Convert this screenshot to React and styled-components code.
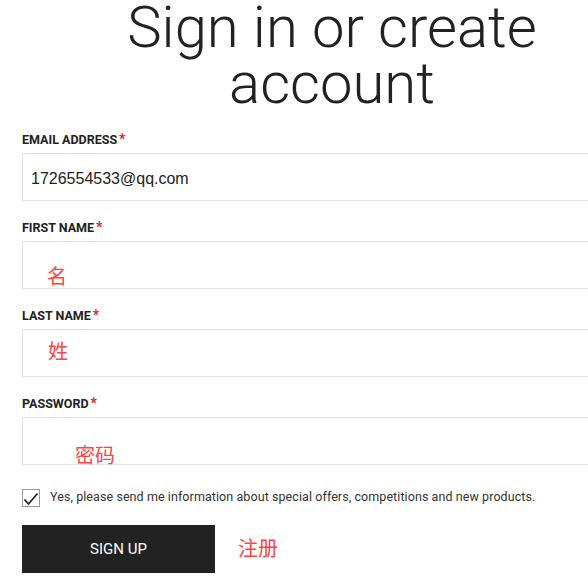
import React from "react";
import styled, { createGlobalStyle } from "styled-components";

const GlobalStyle = createGlobalStyle`
  html, body {
    margin: 0;
    padding: 0;
    background: #fff;
    overflow: hidden;
  }
  body {
    font-family: Roboto, "Liberation Sans", sans-serif;
    color: #222;
  }
`;

const fields = [
  { label: "Email address", value: "1726554533@qq.com" },
  { label: "First name", note: "名", noteLeft: 24, noteTop: 24 },
  { label: "Last name", note: "姓", noteLeft: 25, noteTop: 11 },
  { label: "Password", note: "密码", noteLeft: 52, noteTop: 27 }
];

class App extends React.Component {
  renderFields = () => {
    return fields.map((field, index) => (
      <Field key={index}>
        <Label>
          {field.label}
          <Star>*</Star>
        </Label>
        <InputBox>
          {field.value && <Value>{field.value}</Value>}
          {field.note && (
            <Note style={{ left: field.noteLeft, top: field.noteTop }}>
              {field.note}
            </Note>
          )}
        </InputBox>
      </Field>
    ));
  };

  render() {
    return (
      <>
        <GlobalStyle />
        <Page>
          <Title>
            Sign in or create
            <br />
            account
          </Title>
          <Form>
            {this.renderFields()}
            <CheckRow>
              <CheckBox>
                <svg width="16" height="14" viewBox="0 0 16 14">
                  <path
                    d="M1.5 7.5 L5.5 12 L14.5 1.5"
                    fill="none"
                    stroke="#222"
                    strokeWidth="1.8"
                  />
                </svg>
              </CheckBox>
              <CheckText>
                Yes, please send me information about special offers,
                competitions and new products.
              </CheckText>
            </CheckRow>
            <ButtonRow>
              <SignUp>SIGN UP</SignUp>
              <Annotation>注册</Annotation>
            </ButtonRow>
          </Form>
        </Page>
      </>
    );
  }
}

const Page = styled.div`
  width: 620px;
  margin-left: 22px;
`;

const Title = styled.h1`
  margin: -1px 0 0;
  font-family: Roboto, sans-serif;
  font-weight: 300;
  font-size: 58px;
  line-height: 56px;
  text-align: center;
  color: #222;
`;

const Form = styled.div`
  display: flex;
  flex-direction: column;
  margin-top: 21px;
`;

const Field = styled.div`
  display: flex;
  flex-direction: column;
  margin-bottom: 19px;
`;

const Label = styled.div`
  height: 15px;
  font-family: Roboto, sans-serif;
  font-weight: 700;
  font-size: 12.5px;
  line-height: 15px;
  text-transform: uppercase;
  color: #222;
  margin-bottom: 6px;
`;

const Star = styled.span`
  color: #e31e1e;
  margin-left: 2px;
  font-size: 14px;
  line-height: 0;
`;

const InputBox = styled.div`
  position: relative;
  height: 46px;
  border: 1px solid #e3e3e3;
  display: flex;
  align-items: center;
  padding-left: 8px;
`;

const Value = styled.span`
  font-family: "Liberation Sans", Arial, sans-serif;
  font-size: 16px;
  color: #222;
  margin-top: 3px;
`;

const Note = styled.span`
  position: absolute;
  font-family: "Noto Sans CJK SC", sans-serif;
  font-size: 20px;
  line-height: 20px;
  color: #f44;
`;

const CheckRow = styled.div`
  display: flex;
  align-items: center;
  gap: 10px;
  margin-top: 5px;
`;

const CheckBox = styled.div`
  width: 16px;
  height: 16px;
  border: 1px solid #999;
  display: flex;
  align-items: flex-end;
  justify-content: center;
  box-sizing: content-box;
`;

const CheckText = styled.span`
  font-family: Roboto, sans-serif;
  font-size: 12.5px;
  letter-spacing: 0.08px;
  color: #333;
  margin-top: -4px;
`;

const ButtonRow = styled.div`
  display: flex;
  align-items: center;
  gap: 23px;
  margin-top: 18px;
`;

const SignUp = styled.button`
  width: 193px;
  height: 48px;
  border: none;
  background: #222;
  color: #fff;
  font-family: Roboto, sans-serif;
  font-size: 15px;
  cursor: pointer;
`;

const Annotation = styled.span`
  font-family: "Noto Sans CJK SC", sans-serif;
  font-size: 20px;
  color: #f44;
  margin-top: -3px;
`;

export default App;
